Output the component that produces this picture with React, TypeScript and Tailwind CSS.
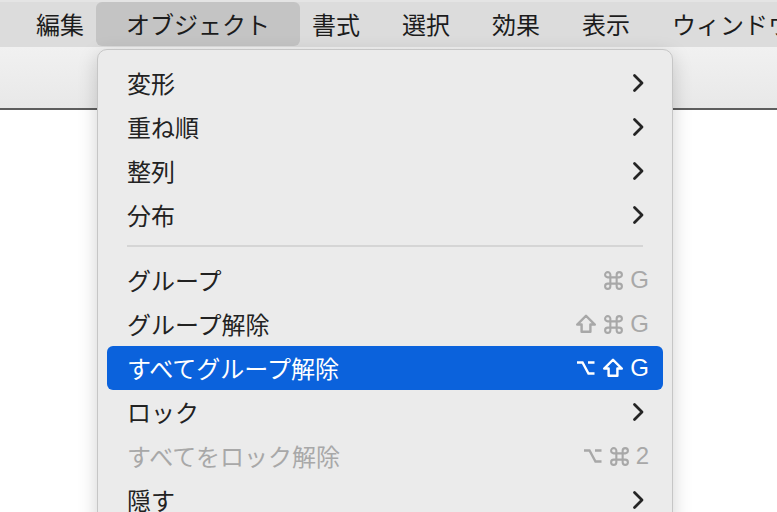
import React from "react";

const jp = { fontFamily: '"Noto Sans CJK JP", "Noto Sans", sans-serif' };
const latin = { fontFamily: '"Liberation Sans", "DejaVu Sans", sans-serif' };

type Key = "cmd" | "shift" | "opt" | string;

type Item =
  | { kind: "sep" }
  | { kind: "item"; label: string; submenu?: boolean; keys?: Key[]; active?: boolean; disabled?: boolean };

const items: Item[] = [
  { kind: "item", label: "変形", submenu: true },
  { kind: "item", label: "重ね順", submenu: true },
  { kind: "item", label: "整列", submenu: true },
  { kind: "item", label: "分布", submenu: true },
  { kind: "sep" },
  { kind: "item", label: "グループ", keys: ["cmd", "G"] },
  { kind: "item", label: "グループ解除", keys: ["shift", "cmd", "G"] },
  { kind: "item", label: "すべてグループ解除", keys: ["opt", "shift", "G"], active: true },
  { kind: "item", label: "ロック", submenu: true },
  { kind: "item", label: "すべてをロック解除", keys: ["opt", "cmd", "2"], disabled: true },
  { kind: "item", label: "隠す", submenu: true },
];

const menus = ["編集", "オブジェクト", "書式", "選択", "効果", "表示", "ウィンドウ"];

function KeyGlyph({ k }: { k: Key }) {
  if (k === "cmd") {
    return (
      <svg viewBox="0 0 20 20" className="w-[21px] h-[21px]" fill="none" stroke="currentColor" strokeWidth={2}>
        <path d="M7 7V4.5A2.5 2.5 0 1 0 4.5 7H15.5A2.5 2.5 0 1 0 13 4.5V15.5A2.5 2.5 0 1 0 15.5 13H4.5A2.5 2.5 0 1 0 7 15.5Z" />
      </svg>
    );
  }
  if (k === "shift") {
    return (
      <svg viewBox="0 0 20 20" className="w-[22px] h-[22px]" fill="none" stroke="currentColor" strokeWidth={2.2} strokeLinejoin="round">
        <path d="M10 2.5L18 10.5H14V17H6V10.5H2Z" />
      </svg>
    );
  }
  if (k === "opt") {
    return (
      <svg viewBox="0 0 20 20" className="w-[21px] h-[20px]" fill="none" stroke="currentColor" strokeWidth={2.4}>
        <path d="M1.5 4.5H7L13 15.5H19M12.5 4.5H19" />
      </svg>
    );
  }
  return (
    <span className="text-[24px] leading-[24px]" style={latin}>
      {k}
    </span>
  );
}

function Chevron() {
  return (
    <svg viewBox="0 0 12 20" className="w-[12px] h-[20px] mr-[5px]" fill="none" stroke="currentColor" strokeWidth={2.8} strokeLinecap="round" strokeLinejoin="round">
      <path d="M2.5 2.5L10 10L2.5 17.5" />
    </svg>
  );
}

function MenuRow({ item }: { item: Extract<Item, { kind: "item" }> }) {
  const text = item.active ? "text-white" : item.disabled ? "text-[#a8a8a8]" : "text-[#222222]";
  const keyColor = item.active ? "text-white" : "text-[#a8a8a8]";
  return (
    <div className={`h-[44px] flex items-center justify-between pl-[20px] pr-[14px] rounded-[6px] ${item.active ? "bg-[#0b62dc]" : ""}`}>
      <span className={`text-[24px] leading-[30px] ${text}`} style={jp}>
        {item.label}
      </span>
      {item.submenu && (
        <span className={item.active ? "text-white" : "text-[#242424]"}>
          <Chevron />
        </span>
      )}
      {item.keys && (
        <span className={`flex items-center gap-[6px] ${keyColor}`}>
          {item.keys.map((k, i) => (
            <KeyGlyph key={i} k={k} />
          ))}
        </span>
      )}
    </div>
  );
}

export default function App() {
  return (
    <div className="relative w-[777px] h-[512px] overflow-hidden bg-white">
      {/* menu bar */}
      <div className="h-[47px] bg-[#dcdcdc] border-t-[2px] border-[#e4e4e4] flex items-start pl-[36px] gap-[42px] whitespace-nowrap">
        {menus.map((m) => (
          <div
            key={m}
            className={`h-[44px] flex items-center text-[24px] leading-[30px] text-[#1c1c1c] shrink-0 ${
              m === "オブジェクト" ? "px-[30px] -mx-[30px] rounded-[6px] bg-[#c4c4c4]" : ""
            }`}
            style={jp}
          >
            {m}
          </div>
        ))}
      </div>

      {/* toolbar */}
      <div className="h-[63px] bg-gradient-to-b from-[#f1f1f1] to-[#e8e8e8] border-b-[2px] border-[#5e5e5e]" />

      {/* dropdown */}
      <div className="absolute left-[97px] top-[49px] w-[576px] h-[480px] rounded-[10px] bg-[#ebebeb] border border-[#c6c6c6] shadow-[0_6px_20px_rgba(0,0,0,0.18)] px-[9px] pt-[11px]">
        {items.map((it, i) =>
          it.kind === "sep" ? (
            <div key={i} className="pt-[8px] pb-[11px] px-[20px]">
              <div className="h-[2px] bg-[#d5d5d5]" />
            </div>
          ) : (
            <MenuRow key={i} item={it} />
          )
        )}
      </div>
    </div>
  );
}
